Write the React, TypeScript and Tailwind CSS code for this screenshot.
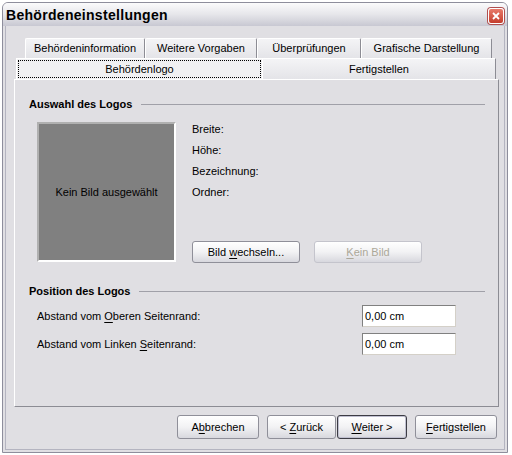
import React from 'react';

// Dialog face colour (XP silver)
const FACE = 'bg-[#e0dfe3]';

const Mn: React.FC<{ children: React.ReactNode }> = ({ children }) => (
  <span className="underline underline-offset-[2px]">{children}</span>
);

const XpButton: React.FC<{
  width: string;
  disabled?: boolean;
  isDefault?: boolean;
  height?: string;
  children: React.ReactNode;
}> = ({ width, disabled, isDefault, height = 'h-[22px]', children }) => (
  <div
    className={`${width} ${height} flex items-center justify-center rounded-[3px] border bg-gradient-to-b from-[#ffffff] via-[#f2f2f4] to-[#d8d8de] ${
      isDefault
        ? 'border-[#3c3c44] shadow-[inset_0_0_0_1px_#c0c0d0]'
        : 'border-[#8f8f99]'
    } ${disabled ? 'text-[#aca899] border-[#c4c4cc]' : 'text-black'}`}
  >
    {children}
  </div>
);

const SectionHeading: React.FC<{ title: string }> = ({ title }) => (
  <div className="flex items-center h-[14px] pl-[14px] pr-[13px]">
    <span className="font-bold whitespace-nowrap">{title}</span>
    <div className="flex-1 ml-[9px] h-[1px] bg-[#a0a0a8]" />
  </div>
);

const BackTab: React.FC<{ width: string; label: string }> = ({ width, label }) => (
  <div
    className={`${width} h-[20px] flex items-center justify-center border-t border-l border-white border-r border-r-[#8c8c94] rounded-t-[2px] bg-gradient-to-b from-[#f4f4f6] to-[#e4e4e8]`}
  >
    {label}
  </div>
);

const infoLabels = ['Breite:', 'Höhe:', 'Bezeichnung:', 'Ordner:'];

export default function App() {
  return (
    <div className="w-[512px] h-[455px] bg-white font-['Liberation_Sans',Arial,sans-serif] text-[11px] text-black leading-none">
      <div
        className={`ml-[2px] mt-[2px] w-[506px] h-[451px] border border-[#8e8e9c] rounded-t-[6px] ${FACE} flex flex-col overflow-hidden`}
      >
        {/* Title bar */}
        <div className="h-[23px] flex items-center justify-between pl-[3px] pr-[3px] bg-gradient-to-b from-[#fbfbfc] via-[#e6e6ea] to-[#c8c8d2]">
          <span className="text-[14px] font-bold tracking-[0.3px] text-black">
            Behördeneinstellungen
          </span>
          <div className="w-[16px] h-[16px] mt-[2px] rounded-[3px] border border-white bg-gradient-to-b from-[#e87a6a] to-[#c43c2c] flex items-center justify-center shadow-[0_0_0_1px_#b05050]">
            <svg width="8" height="8" viewBox="0 0 8 8">
              <path d="M1 1 L7 7 M7 1 L1 7" stroke="white" strokeWidth="1.8" />
            </svg>
          </div>
        </div>

        {/* Frame + body */}
        <div className="flex-1 mx-[2px] mb-[2px] border-x border-b border-[#b4b4c0] flex flex-col pl-[8px] pr-[6px]">
          {/* Tabs */}
          <div className="mt-[12px] flex flex-col">
            <div className="flex pl-[11px]">
              <BackTab width="w-[120px]" label="Behördeninformation" />
              <BackTab width="w-[112px]" label="Weitere Vorgaben" />
              <BackTab width="w-[104px]" label="Überprüfungen" />
              <BackTab width="w-[131px]" label="Grafische Darstellung" />
            </div>
            <div className="flex pl-[2px]">
              <div className="w-[246px] h-[21px] border-t border-l border-white bg-[#f0f0f2] p-[1px]">
                <div className="w-full h-full border border-dotted border-black flex items-center justify-center">
                  Behördenlogo
                </div>
              </div>
              <div className="w-[234px] h-[21px] flex items-center justify-center border-t border-l border-white border-r border-r-[#8c8c94] bg-gradient-to-b from-[#f4f4f6] to-[#e4e4e8]">
                Fertigstellen
              </div>
            </div>
          </div>

          {/* Tab panel */}
          <div className="w-[485px] h-[328px] border border-t-white border-l-white border-r-[#8c8c94] border-b-[#8c8c94] flex flex-col">
            <div className="mt-[17px]">
              <SectionHeading title="Auswahl des Logos" />
            </div>

            <div className="mt-[8px] flex pl-[22px]">
              <div className="mt-[3px] w-[139px] h-[140px] bg-[#808080] border-2 border-t-[#b0b0b0] border-l-[#b0b0b0] border-r-white border-b-white flex items-center justify-center">
                Kein Bild ausgewählt
              </div>
              <div className="ml-[16px] flex flex-col">
                {infoLabels.map((l) => (
                  <div key={l} className="h-[21px] flex items-center">
                    {l}
                  </div>
                ))}
                <div className="mt-[38px] flex gap-[14px]">
                  <XpButton width="w-[108px]">
                    <span>
                      Bild <Mn>w</Mn>echseln...
                    </span>
                  </XpButton>
                  <XpButton width="w-[108px]" disabled>
                    <span>
                      <Mn>K</Mn>ein Bild
                    </span>
                  </XpButton>
                </div>
              </div>
            </div>

            <div className="mt-[21px]">
              <SectionHeading title="Position des Logos" />
            </div>

            <div className="mt-[7px] flex flex-col gap-[6px] pl-[22px]">
              <div className="flex items-center h-[22px]">
                <span className="w-[325px]">
                  Abstand vom <Mn>O</Mn>beren Seitenrand:
                </span>
                <div className="w-[94px] h-[22px] bg-white border border-t-[#808080] border-l-[#808080] border-r-[#d4d0c8] border-b-[#d4d0c8] flex items-center pl-[2px]">
                  0,00 cm
                </div>
              </div>
              <div className="flex items-center h-[22px]">
                <span className="w-[325px]">
                  Abstand vom Linken <Mn>S</Mn>eitenrand:
                </span>
                <div className="w-[94px] h-[22px] bg-white border border-t-[#808080] border-l-[#808080] border-r-[#d4d0c8] border-b-[#d4d0c8] flex items-center pl-[2px]">
                  0,00 cm
                </div>
              </div>
            </div>
          </div>

          {/* Bottom buttons */}
          <div className="mt-[8px] flex justify-end pr-[1px]">
            <XpButton width="w-[82px]" height="h-[24px]">
              <span>
                A<Mn>b</Mn>brechen
              </span>
            </XpButton>
            <div className="ml-[8px] flex">
              <XpButton width="w-[69px]" height="h-[24px]">
                <span>
                  &lt; <Mn>Z</Mn>urück
                </span>
              </XpButton>
              <div className="ml-[1px]">
                <XpButton width="w-[70px]" height="h-[24px]" isDefault>
                  <span>
                    <Mn>W</Mn>eiter &gt;
                  </span>
                </XpButton>
              </div>
            </div>
            <div className="ml-[8px]">
              <XpButton width="w-[82px]" height="h-[24px]">
                <span>
                  <Mn>F</Mn>ertigstellen
                </span>
              </XpButton>
            </div>
          </div>
        </div>
      </div>
    </div>
  );
}
